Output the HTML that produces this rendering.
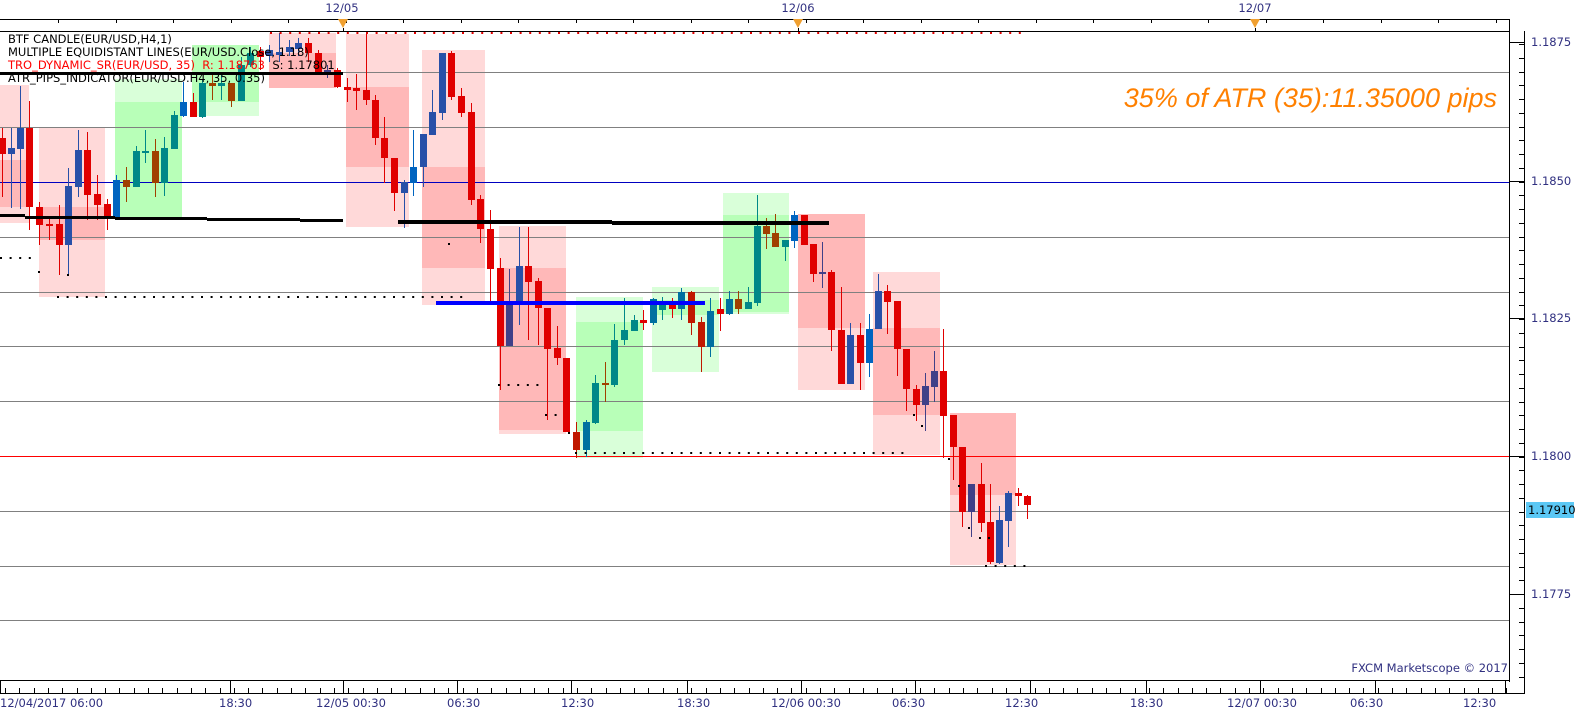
<!DOCTYPE html>
<html><head><meta charset="utf-8"><style>
html,body{margin:0;padding:0;background:#fff;width:1583px;height:720px;overflow:hidden}
svg{display:block}
text{font-family:"DejaVu Sans","Liberation Sans",sans-serif}
</style></head><body>
<svg id="s" width="1583" height="720" xmlns="http://www.w3.org/2000/svg">
<rect width="1583" height="720" fill="#fff"/>
<g id="boxes"></g>
<g id="grid"></g>
<g id="cand"></g>
<g id="lines"></g>
<g id="axes"></g>
<g font-size="11.5" fill="#000">
<text x="8" y="43">BTF CANDLE(EUR/USD,H4,1)</text>
<text x="8" y="56">MULTIPLE EQUIDISTANT LINES(EUR/USD.Close, 1.18)</text>
<text x="8" y="69" fill="#ff0000">TRO_DYNAMIC_SR(EUR/USD, 35)&#160;&#160;R: 1.18763&#160;&#160;<tspan fill="#000">S: 1.17801</tspan></text>
<text x="8" y="82">ATR_PIPS_INDICATOR(EUR/USD.H4, 35, 0.35)</text>
</g>
<text x="1497" y="107" text-anchor="end" font-style="italic" font-size="27" fill="#ff8000" style="font-family:'Liberation Sans',sans-serif">35% of ATR (35):11.35000 pips</text>
<text x="1508" y="672" text-anchor="end" font-size="11.5" fill="#303080">FXCM Marketscope © 2017</text>
<g font-size="11.5" fill="#303080">
<text x="342" y="12" text-anchor="middle">12/05</text>
<text x="798" y="12" text-anchor="middle">12/06</text>
<text x="1255" y="12" text-anchor="middle">12/07</text>
<text x="1531" y="46">1.1875</text>
<text x="1531" y="185">1.1850</text>
<text x="1531" y="322">1.1825</text>
<text x="1531" y="460">1.1800</text>
<text x="1531" y="598">1.1775</text>
<text x="0" y="707">12/04/2017 06:00</text>
<text x="219" y="707">18:30</text>
<text x="316" y="707">12/05 00:30</text>
<text x="447" y="707">06:30</text>
<text x="561" y="707">12:30</text>
<text x="677" y="707">18:30</text>
<text x="771" y="707">12/06 00:30</text>
<text x="892" y="707">06:30</text>
<text x="1005" y="707">12:30</text>
<text x="1130" y="707">18:30</text>
<text x="1227" y="707">12/07 00:30</text>
<text x="1350" y="707">06:30</text>
<text x="1463" y="707">12:30</text>
</g>
<rect x="1526" y="502" width="48" height="16" fill="#5bc8f5"/>
<text x="1528" y="514" font-size="11.5" fill="#000">1.17910</text>
</svg>
<script>
var NS="http://www.w3.org/2000/svg";
function add(g,tag,a){var e=document.createElementNS(NS,tag);for(var k in a)e.setAttribute(k,a[k]);document.getElementById(g).appendChild(e);return e;}
var LP="#ffd9d9",DP="#ffb8b8",LG="#d9ffd9",DG="#b8ffb8";
var B=[
[0,29,[[85,160,LP],[160,207,DP],[207,223,LP]]],
[39,105,[[128,207,LP],[207,240,DP],[240,297,LP]]],
[115,182,[[79,102,LG],[102,217,DG]]],
[192,259,[[45,102,DG],[102,116,LG]]],
[269,336,[[33,53,LP],[53,88,DP]]],
[346,409,[[34,87,LP],[87,167,DP],[167,227,LP]]],
[422,485,[[50,167,LP],[167,268,DP],[268,305,LP]]],
[499,566,[[226,268,LP],[268,430,DP],[430,434,LP]]],
[576,643,[[297,322,LG],[322,431,DG],[431,458,LG]]],
[652,719,[[287,300,LG],[300,315,DG],[315,372,LG]]],
[723,789,[[193,215,LG],[215,312,DG],[312,314,LG]]],
[798,865,[[214,328,DP],[328,390,LP]]],
[873,940,[[272,328,LP],[328,415,DP],[415,455,LP]]],
[950,1016,[[413,495,DP],[495,565,LP]]]];
B.forEach(function(b){b[2].forEach(function(s){add("boxes","rect",{x:b[0],y:s[0],width:b[1]-b[0],height:s[1]-s[0],fill:s[2]});});});
[72,127,237,292,346,401,511,566,620].forEach(function(y){add("grid","rect",{x:0,y:y,width:1510,height:1,fill:"#808080"});});
add("grid","rect",{x:0,y:182,width:1510,height:1,fill:"#0000c0"});
add("grid","rect",{x:0,y:456,width:1510,height:1,fill:"#ff0000"});
var C={r:"#e00000",b:"#2850a8",l:"#0064c0",t:"#008888",o:"#a04000",p:"#404088",c:"#0070a0",d:"#c01800"};
var K=[
[2,138,154,128,197,"r"],[11,148,154,128,208,"b"],[20,128,149,86,209,"b"],[29,128,207,101,230,"r"],[39,207,225,202,245,"r"],[49,224,226,218,240,"r"],[59,224,245,205,275,"r"],[68,186,245,168,275,"b"],[78,150,187,130,197,"b"],[87,150,195,132,220,"r"],[97,194,205,175,220,"r"],[107,204,217,199,230,"r"],[116,180,218,175,220,"l"],[126,180,187,167,202,"o"],[136,151,187,146,187,"t"],[145,151,153,130,163,"t"],[155,151,183,139,197,"o"],[164,148,183,137,196,"t"],[174,115,149,111,149,"t"],[183,102,116,82,117,"l"],[193,102,117,93,117,"r"],[202,83,117,80,118,"t"],[212,83,86,73,100,"o"],[221,83,86,75,100,"t"],[231,83,101,83,107,"o"],[241,65,101,57,101,"t"],[250,53,65,47,67,"t"],[260,51,57,47,70,"r"],[269,50,56,45,62,"b"],[279,52,55,33,62,"b"],[289,47,52,40,56,"b"],[298,43,49,38,56,"b"],[308,43,53,38,62,"r"],[318,53,72,50,74,"r"],[327,70,73,65,78,"p"],[337,70,87,68,88,"r"],[347,87,90,78,102,"r"],[356,88,91,74,110,"r"],[366,90,100,33,105,"r"],
[375,100,138,95,145,"r"],[384,138,158,117,183,"r"],[394,158,193,158,211,"r"],[404,182,193,180,228,"b"],[413,167,183,130,196,"l"],[423,134,167,134,187,"b"],[432,112,135,90,135,"b"],[442,53,113,53,120,"b"],[451,53,97,51,100,"r"],[461,96,113,88,117,"r"],[471,112,200,103,205,"r"],[480,199,229,195,243,"r"],[490,229,269,210,305,"r"],[500,268,346,258,390,"r"],[509,302,346,269,346,"p"],[519,266,303,227,325,"b"],[528,266,282,227,340,"r"],[538,281,308,278,345,"r"],[547,308,349,308,420,"r"],[557,348,358,326,365,"r"],[566,358,432,358,432,"r"],[576,432,450,422,458,"d"],[586,422,450,420,457,"c"],[595,383,423,375,424,"t"],[605,383,385,362,402,"o"],[614,340,385,324,387,"t"],[624,330,340,298,345,"t"],[634,320,331,315,331,"t"],[643,320,323,310,330,"r"],[653,299,323,298,325,"c"],[662,302,310,297,320,"t"],[672,302,309,298,318,"r"],[681,292,309,288,320,"c"],[691,292,323,291,335,"d"],[701,322,347,317,372,"d"],[710,311,347,298,357,"c"],
[720,309,314,298,331,"r"],[729,299,314,291,315,"c"],[738,299,309,291,314,"o"],[748,302,309,287,309,"t"],[757,226,303,195,306,"t"],[766,226,234,218,249,"o"],[775,233,247,214,247,"o"],[785,240,247,240,261,"t"],[794,215,241,211,248,"l"],[804,215,245,215,245,"r"],[813,244,274,244,282,"r"],[822,272,274,242,288,"p"],[831,272,330,270,351,"r"],[841,330,384,287,384,"r"],[850,335,384,323,384,"b"],[860,335,363,323,390,"r"],[869,329,363,314,377,"l"],[878,291,329,274,329,"b"],[887,291,302,285,334,"r"],[897,301,349,301,376,"r"],[906,349,389,349,411,"r"],[916,389,405,385,421,"r"],[925,386,405,373,431,"p"],[934,371,387,351,402,"p"],[943,371,416,329,458,"r"],[953,415,447,415,480,"r"],[962,447,512,447,527,"r"],[971,484,512,484,537,"p"],[981,484,523,463,532,"r"],[990,522,562,484,564,"r"],[999,520,563,506,564,"b"],[1008,493,521,491,547,"b"],[1018,493,496,488,506,"r"],[1027,496,505,495,519,"r"]];
K.forEach(function(k){var col=C[k[5]];add("cand","rect",{x:k[0],y:k[3],width:1,height:k[4]-k[3],fill:col});add("cand","rect",{x:k[0]-3,y:k[1],width:7,height:Math.max(2,k[2]-k[1]),fill:col});});
function L(x1,x2,y,h,c){add("lines","rect",{x:x1,y:y,width:x2-x1,height:h,fill:c});}
L(0,343,72,3,"#000");
L(0,25,214,3,"#000");L(25,115,216,3,"#000");L(115,207,217,3,"#000");L(207,300,218,3,"#000");L(300,343,219,3,"#000");
L(398,612,220,4,"#000");L(612,829,221,4,"#000");
L(436,705,301,4,"#0000ff");
function D(x1,x2,y,c,st){for(var x=x1;x<=x2;x+=st)add("lines","rect",{x:x,y:y,width:2,height:2,fill:c});}
D(270,1028,32,"#e00000",9.6);
D(0,30,257,"#000",9.6);D(57,467,296,"#000",9.6);D(498,537,384,"#000",9.6);D(545,556,414,"#000",9.6);
D(575,905,452,"#000",9.6);D(985,1028,565,"#000",9.6);
[[448,243],[568,432],[913,414],[921,425],[948,458],[958,485],[968,527],[979,537],[988,537],[38,271],[67,274]].forEach(function(p){add("lines","rect",{x:p[0],y:p[1],width:2,height:2,fill:"#000"});});
function A(x,y,w,h){add("axes","rect",{x:x,y:y,width:w,height:h,fill:"#000"});}
A(0,19,1510,1);A(0,31,1510,1);A(1509,19,1,13);
for(var x=58;x<1510;x+=57.5)A(Math.round(x),19,1,4);
A(1509,31,1,651);A(0,680,1510,1);
A(1524,31,1,663);A(0,693,1525,1);
for(var y=44;y<690;y+=13.75)A(1519,Math.round(y),5,1);
[42,181,318,456,594].forEach(function(y){A(1510,y,14,1);});
for(var x=5;x<1520;x+=14.3)A(Math.round(x),688,1,5);
[0,230,343,457,571,687,801,915,1030,1146,1260,1375,1505].forEach(function(x){A(x,681,1,12);});
[343,798,1255].forEach(function(x){add("axes","polygon",{points:(x-5)+",19 "+(x+5)+",19 "+x+",28",fill:"#f0a030"});A(x,28,1,4);});
</script>
</body></html>
